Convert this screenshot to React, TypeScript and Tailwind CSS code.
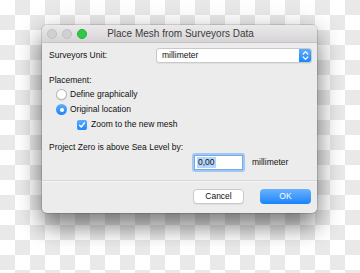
export default function App() {
  const font = { fontFamily: '"Liberation Sans", Arial, sans-serif' };

  return (
    <div
      className="w-[360px] h-[273px] overflow-hidden bg-[conic-gradient(#e9e9e9_25%,#ffffff_0_50%,#e9e9e9_0_75%,#ffffff_0)] bg-[length:30px_30px] pt-[25px] pl-[42px]"
      style={font}
    >
      {/* window */}
      <div className="w-[275px] h-[188px] rounded-[5px] overflow-hidden bg-[#ececec] shadow-[0_14px_22px_rgba(0,0,0,0.42),0_4px_30px_rgba(0,0,0,0.18),0_0_0_1px_rgba(0,0,0,0.12)] flex flex-col">
        {/* title bar */}
        <div className="relative h-[18px] shrink-0 bg-gradient-to-b from-[#ebe9eb] to-[#d6d4d6] border-b border-[#c4c4c4] flex items-center">
          <div className="flex items-center gap-[5px] pl-[5px]">
            <span className="w-[10px] h-[10px] rounded-full bg-[#d0d0d0] border border-[#c0c0c0]" />
            <span className="w-[10px] h-[10px] rounded-full bg-[#d0d0d0] border border-[#c0c0c0]" />
            <span className="w-[10px] h-[10px] rounded-full bg-[#2fcb48] border border-[#27aa3c]" />
          </div>
          <div className="absolute inset-0 flex items-center justify-center text-[10px] text-[#3c3c3c] pl-[2px]">
            Place Mesh from Surveyors Data
          </div>
        </div>

        {/* content */}
        <div className="flex flex-col text-[8.5px] text-[#111] pt-[5px]">
          <div className="flex items-center h-[15px] pl-[7px] pr-[5px]">
            <span className="w-[107px]">Surveyors Unit:</span>
            <div className="flex-1 h-[15px] flex items-stretch bg-white border border-[#c9c9c9] rounded-[3px] overflow-hidden shadow-[0_1px_0_rgba(0,0,0,0.05)]">
              <span className="flex-1 flex items-center pl-[5px]">millimeter</span>
              <span className="w-[12px] bg-gradient-to-b from-[#5cacfb] to-[#1b86fb] flex items-center justify-center">
                <svg width="7" height="11" viewBox="0 0 7 11" fill="none" stroke="white" strokeWidth="1.2" strokeLinecap="round" strokeLinejoin="round">
                  <path d="M1.2 4 L3.5 1.7 L5.8 4" />
                  <path d="M1.2 7 L3.5 9.3 L5.8 7" />
                </svg>
              </span>
            </div>
          </div>

          <div className="mt-[11px] h-[12px] flex items-center pl-[7px]">Placement:</div>

          <div className="mt-px h-[15px] flex items-center pl-[14px] gap-[3px]">
            <span className="w-[11px] h-[11px] rounded-full bg-white border border-[#b4b4b4] shadow-[0_0.5px_1px_rgba(0,0,0,0.15)]" />
            <span>Define graphically</span>
          </div>
          <div className="h-[15px] flex items-center pl-[14px] gap-[3px]">
            <span className="w-[11px] h-[11px] rounded-full bg-gradient-to-b from-[#5cacfb] to-[#1b86fb] flex items-center justify-center">
              <span className="w-[4px] h-[4px] rounded-full bg-white" />
            </span>
            <span>Original location</span>
          </div>
          <div className="h-[15px] flex items-center pl-[35px] gap-[4px]">
            <span className="w-[10px] h-[10px] rounded-[2px] bg-gradient-to-b from-[#5cacfb] to-[#1b86fb] flex items-center justify-center">
              <svg width="8" height="8" viewBox="0 0 8 8" fill="none" stroke="white" strokeWidth="1.4" strokeLinecap="round" strokeLinejoin="round">
                <path d="M1.6 4.3 L3.3 6 L6.4 1.8" />
              </svg>
            </span>
            <span>Zoom to the new mesh</span>
          </div>

          <div className="mt-[9px] h-[12px] flex items-center pl-[7px]">Project Zero is above Sea Level by:</div>

          <div className="h-[19px] flex items-center pl-[150px] gap-[7px]">
            <div className="w-[53px] h-[19px] rounded-[3px] bg-[#9fc8f6] p-[2px]">
              <div className="w-full h-full bg-white border border-[#7aa9e0] flex items-center pl-[2px]">
                <span className="bg-[#b4d5fe] px-px leading-[11px]">0,00</span>
              </div>
            </div>
            <span>millimeter</span>
          </div>

          <div className="mt-[8px] h-px bg-[#d6d6d6] shadow-[0_1px_0_#f6f6f6]" />

          <div className="mt-[8px] h-[15px] flex items-center pl-[151px] gap-[16px]">
            <div className="w-[51px] h-[15px] rounded-[4px] bg-white border border-[#cacaca] shadow-[0_1px_0_rgba(0,0,0,0.06)] flex items-center justify-center">
              Cancel
            </div>
            <div className="w-[51px] h-[15px] rounded-[4px] bg-gradient-to-b from-[#68b2fc] to-[#1284fb] text-white flex items-center justify-center">
              OK
            </div>
          </div>
        </div>
      </div>
    </div>
  );
}
